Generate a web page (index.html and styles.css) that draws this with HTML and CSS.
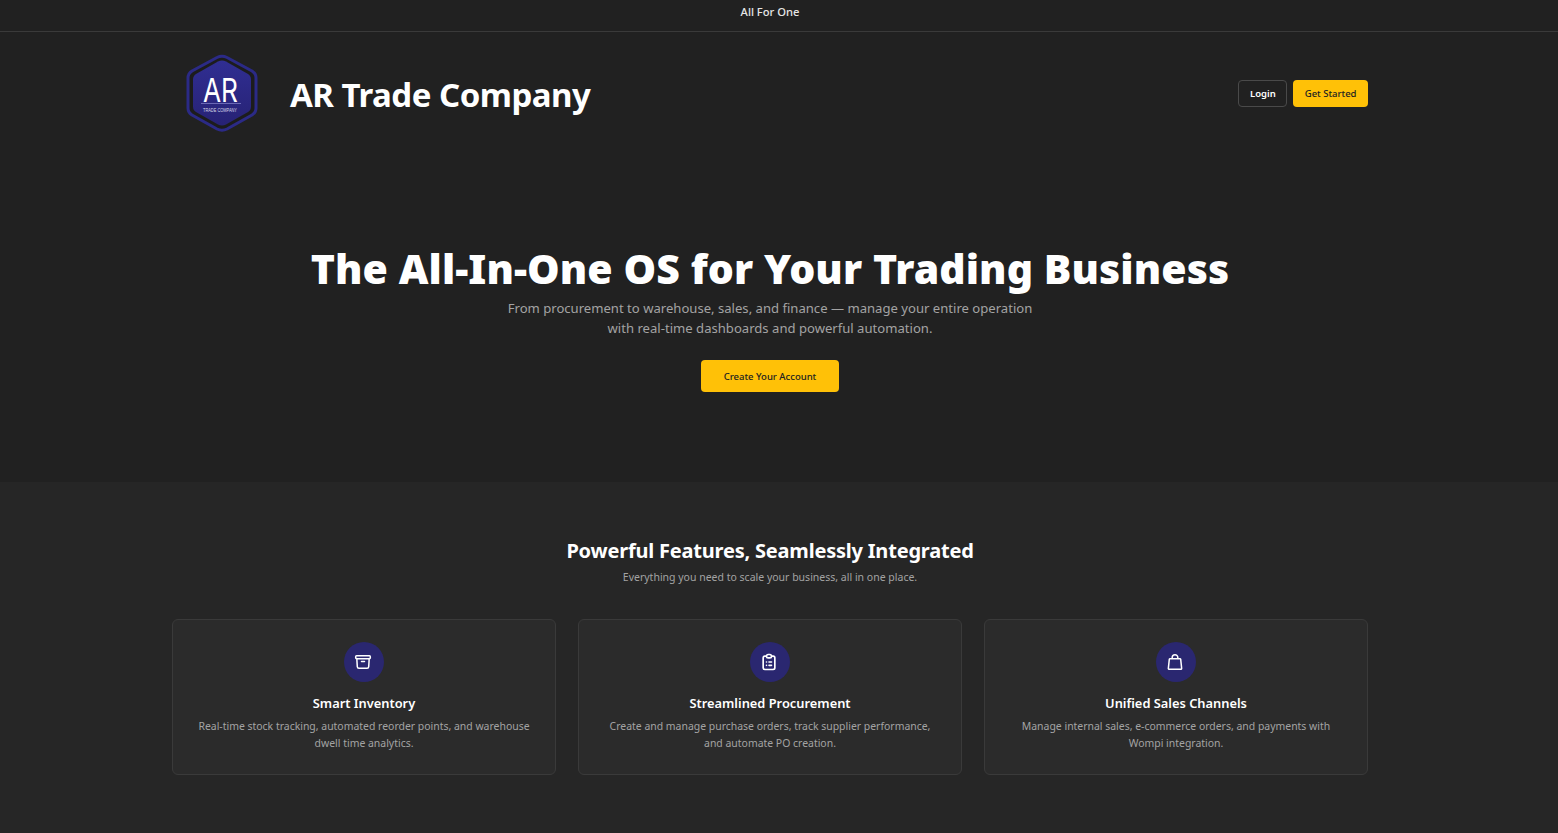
FILE: index.html
```html
<!DOCTYPE html>
<html lang="en">
  <head>
    <meta charset="UTF-8" />
    <title>AR Trade Company</title>
    <link rel="stylesheet" href="styles.css">
  </head>
  <body>
    <div class="topbar">All For One</div>

    <header class="header">
      <div class="brand">
        <svg class="logo" width="80" height="80" viewBox="0 -1 80 80">
          <defs>
            <linearGradient id="logoFill" x1="0" y1="0" x2="0" y2="1">
              <stop offset="0" stop-color="#302e92"/>
              <stop offset="1" stop-color="#272275"/>
            </linearGradient>
          </defs>
          <path d="M35,3.5 Q40,1 45,3.5 L70,17 Q74,19.5 74,24 V54 Q74,58.5 70,61 L45,75 Q40,77.5 35,75 L10,61 Q6,58.5 6,54 V24 Q6,19.5 10,17 Z" fill="#1c1c1c" stroke="#2b2a86" stroke-width="3"/>
          <path d="M36,7.5 Q40,5.5 44,7.5 L66,20 Q69,22 69,25.5 V52.5 Q69,56 66,58 L44,70.5 Q40,72.5 36,70.5 L14,58 Q11,56 11,52.5 V25.5 Q11,22 14,20 Z" fill="url(#logoFill)"/>
          <text x="21" y="47.5" class="logo-mark" textLength="35" lengthAdjust="spacingAndGlyphs">AR</text>
          <rect x="19" y="49" width="40" height="1" fill="#6a68b5"/>
          <text x="21" y="57.5" class="logo-text" textLength="34" lengthAdjust="spacingAndGlyphs">TRADE COMPANY</text>
        </svg>
        <span class="brand-name">AR Trade Company</span>
      </div>
      <div class="actions">
        <button class="btn btn-outline">Login</button>
        <button class="btn btn-yellow">Get Started</button>
      </div>
    </header>

    <section class="hero">
      <h1>The All-In-One OS for Your Trading Business</h1>
      <p>From procurement to warehouse, sales, and finance — manage your entire operation<br>with real-time dashboards and powerful automation.</p>
      <button class="btn btn-yellow btn-large">Create Your Account</button>
    </section>

    <section class="features">
      <h2>Powerful Features, Seamlessly Integrated</h2>
      <p class="subtitle">Everything you need to scale your business, all in one place.</p>
      <div class="cards">
        <div class="card">
          <div class="icon">
            <svg width="18" height="18" viewBox="0 0 24 24" fill="none" stroke="#fff" stroke-width="2" stroke-linecap="round" stroke-linejoin="round"><path d="M20.25 7.5l-.625 10.632a2.25 2.25 0 0 1-2.247 2.118H6.622a2.25 2.25 0 0 1-2.247-2.118L3.75 7.5M10 11.25h4M3.375 7.5h17.25c.621 0 1.125-.504 1.125-1.125v-1.5c0-.621-.504-1.125-1.125-1.125H3.375c-.621 0-1.125.504-1.125 1.125v1.5c0 .621.504 1.125 1.125 1.125z"/></svg>
          </div>
          <h3>Smart Inventory</h3>
          <p>Real-time stock tracking, automated reorder points, and warehouse dwell time analytics.</p>
        </div>
        <div class="card">
          <div class="icon">
            <svg width="20" height="20" viewBox="0 0 24 24" fill="none" stroke="#fff" stroke-width="2" stroke-linecap="round" stroke-linejoin="round"><path d="M9 5H7a2 2 0 0 0-2 2v12a2 2 0 0 0 2 2h10a2 2 0 0 0 2-2V7a2 2 0 0 0-2-2h-2M9 5a2 2 0 0 0 2 2h2a2 2 0 0 0 2-2M9 5a2 2 0 0 1 2-2h2a2 2 0 0 1 2 2m-3 7h3m-3 4h3m-6-4h.01M9 16h.01"/></svg>
          </div>
          <h3>Streamlined Procurement</h3>
          <p>Create and manage purchase orders, track supplier performance, and automate PO creation.</p>
        </div>
        <div class="card">
          <div class="icon">
            <svg width="18" height="18" viewBox="0 0 24 24" fill="none" stroke="#fff" stroke-width="2" stroke-linecap="round" stroke-linejoin="round"><path d="M8.25 7.5V6a3.75 3.75 0 1 1 7.5 0v1.5M19.606 8.507l1.263 12c.07.665-.45 1.243-1.119 1.243H4.25a1.125 1.125 0 0 1-1.12-1.243l1.264-12A1.125 1.125 0 0 1 5.513 7.5h12.974c.576 0 1.059.435 1.119 1.007z"/></svg>
          </div>
          <h3>Unified Sales Channels</h3>
          <p>Manage internal sales, e-commerce orders, and payments with Wompi integration.</p>
        </div>
      </div>
    </section>
  </body>
</html>
```

FILE: styles.css
```css
* {
  margin: 0;
  padding: 0;
  box-sizing: border-box;
}
body {
  background: #212121;
  font-family: "Noto Sans", sans-serif;
  color: white;
  min-height: 100vh;
}
.topbar {
  height: 32px;
  padding: 4px 18px 0 0;
  font-size: 11.2px;
  font-weight: 500;
  line-height: 16px;
  text-align: center;
  color: #e6e6e6;
  border-bottom: 1px solid #3a3a3a;
}
.header {
  width: 1196px;
  margin-left: 172px;
  height: 120px;
  display: flex;
  align-items: center;
  justify-content: space-between;
}
.brand {
  display: flex;
  align-items: center;
  gap: 28px;
  margin-left: 10px;
  margin-top: 2px;
}
.logo-mark {
  font-family: Inter, sans-serif;
  font-size: 33px;
  font-weight: 400;
  fill: white;
}
.logo-text {
  font-family: "Liberation Sans", sans-serif;
  font-size: 6px;
  fill: #d8d8e8;
}
.brand-name {
  font-size: 33px;
  font-weight: 700;
  letter-spacing: -0.5px;
  margin-top: 2px;
}
.actions {
  display: flex;
  gap: 6px;
  margin-top: 3px;
}
.btn {
  font-family: "Noto Sans", sans-serif;
  font-size: 9.5px;
  font-weight: 500;
  height: 27px;
  padding: 0 11.5px;
  border-radius: 4px;
  border: none;
}
.btn-outline {
  background: transparent;
  color: white;
  font-weight: 600;
  padding: 0 10.5px;
  border: 1px solid #4a4a4a;
}
.btn-yellow {
  background: #ffc107;
  color: #212121;
}
.btn-large {
  height: 32px;
  padding: 0 22.5px;
}
.hero {
  height: 330px;
  padding: 86px 18px 0 0;
  text-align: center;
}
.hero h1 {
  font-size: 41px;
  font-weight: 900;
  letter-spacing: 0.07px;
  line-height: 60px;
}
.hero p {
  font-size: 13.1px;
  line-height: 20px;
  color: #a3a3a3;
  margin-bottom: 22px;
}
.features {
  background: #262626;
  height: 351px;
  padding: 54px 18px 0 0;
  text-align: center;
}
.features h2 {
  font-size: 20px;
  font-weight: 700;
  letter-spacing: -0.2px;
  line-height: 30px;
}
.subtitle {
  font-size: 10.5px;
  line-height: 16px;
  color: #a3a3a3;
  margin: 3px 0 34px;
}
.cards {
  width: 1196px;
  margin-left: 172px;
  display: grid;
  grid-template-columns: repeat(3, 1fr);
  gap: 22px;
}
.card {
  height: 156px;
  background: #2b2b2b;
  border: 1px solid #3a3a3a;
  border-radius: 6px;
  padding: 22px 24px 0;
}
.icon {
  width: 40px;
  height: 40px;
  padding-right: 2px;
  border-radius: 50%;
  background: #2a2770;
  margin: 0 auto 12px;
  display: flex;
  align-items: center;
  justify-content: center;
}
.card h3 {
  font-size: 12.85px;
  font-weight: 600;
  line-height: 19px;
  margin-bottom: 5px;
}
.card p {
  font-size: 10.45px;
  line-height: 17px;
  color: #a3a3a3;
}
```
